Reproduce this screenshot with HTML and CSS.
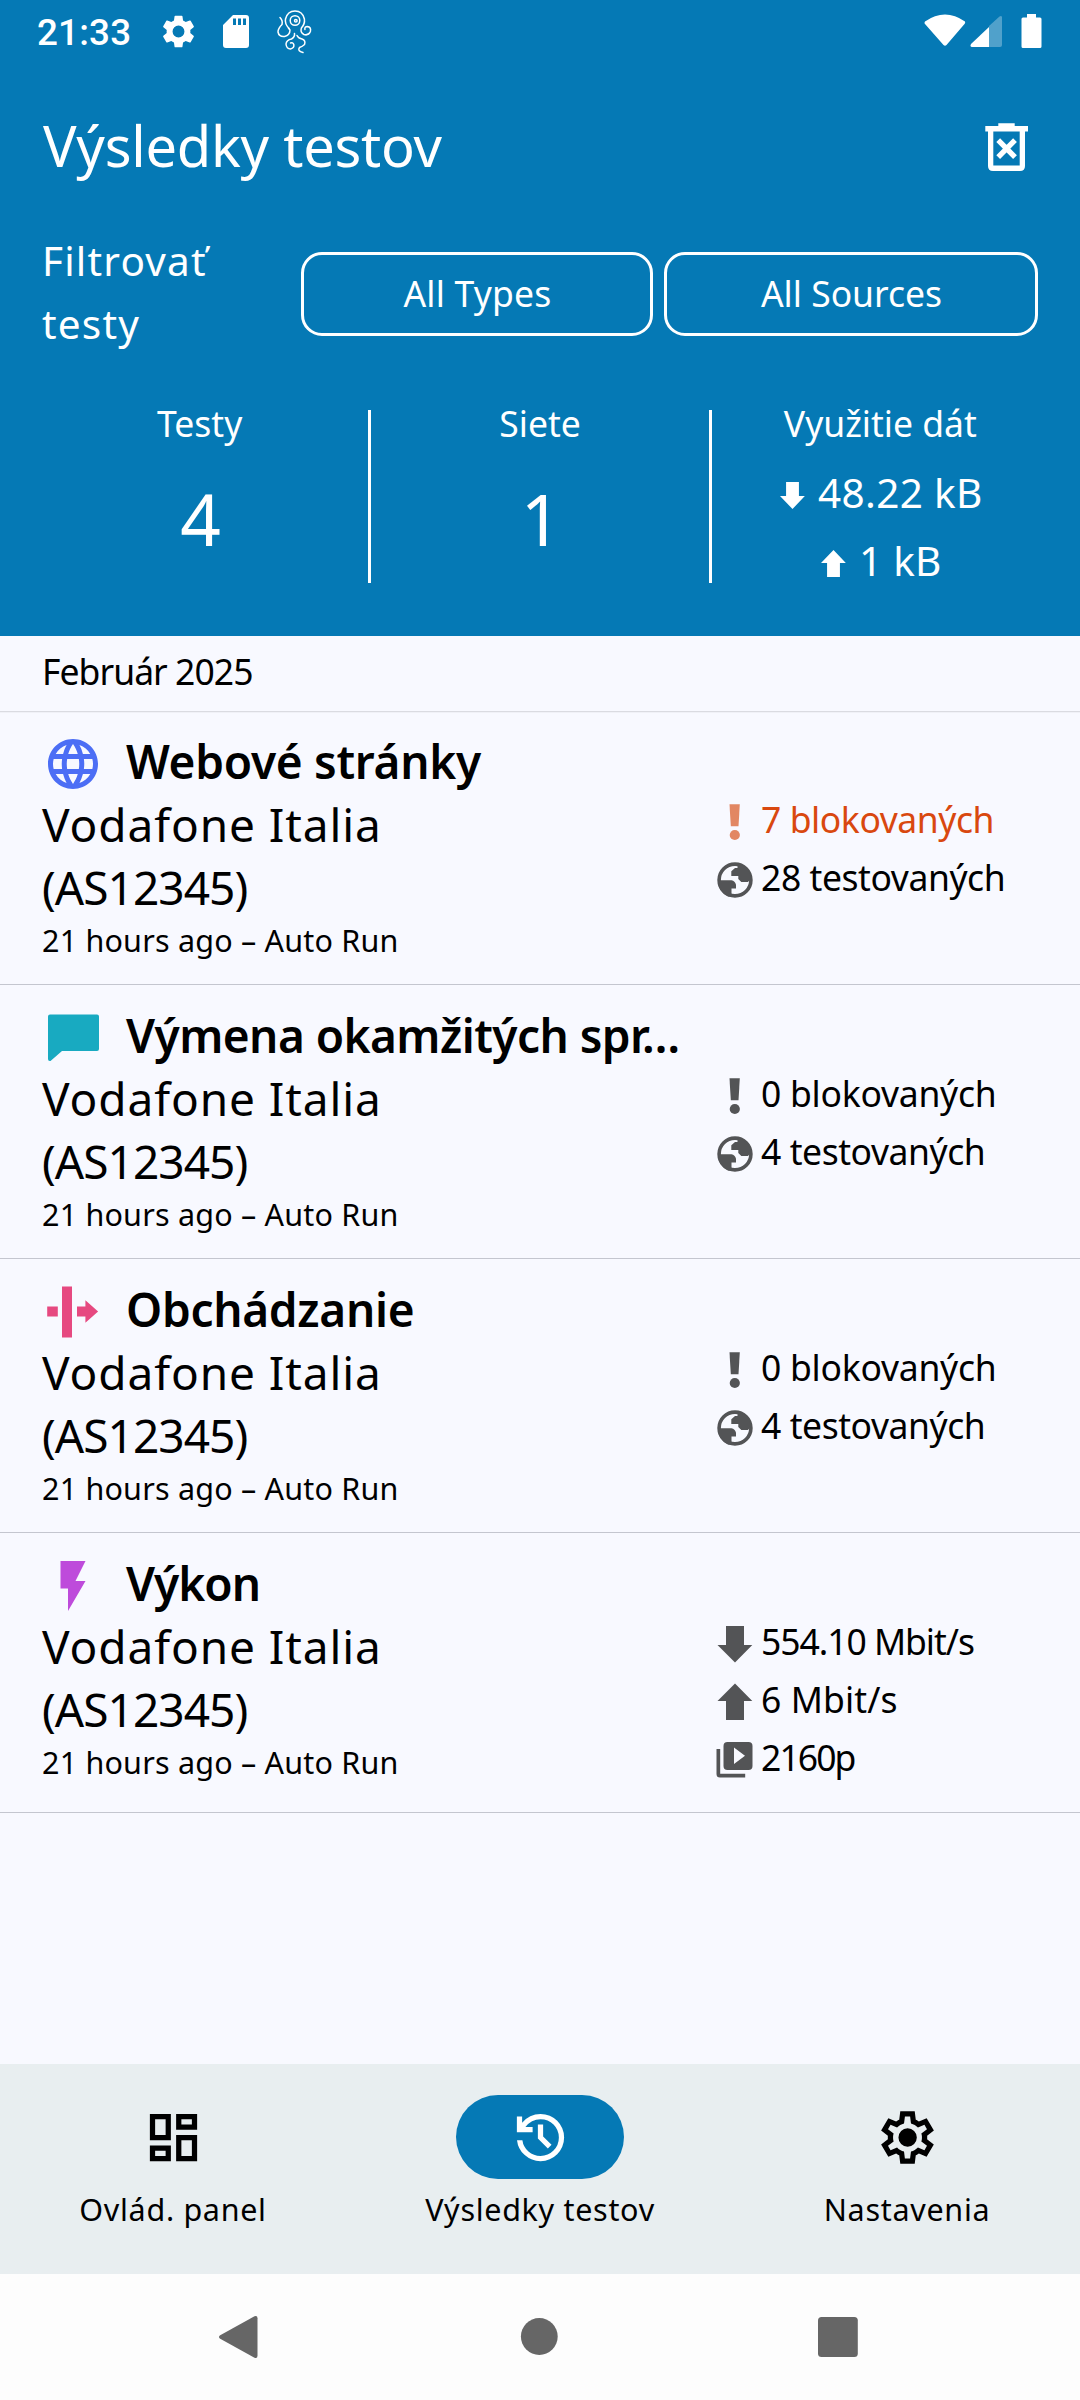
FILE: index.html
```html
<!DOCTYPE html>
<html lang="sk">
<head>
<meta charset="utf-8">
<title>Výsledky testov</title>
<link rel="stylesheet" href="styles.css">
</head>
<body>
<svg width="0" height="0" class="defs" aria-hidden="true">
  <symbol id="bang" viewBox="0 0 42 42"><path d="M15.5 3.300h10.300l-1.300 22h-7.700z"/><circle cx="20.800" cy="34" r="5.100"/></symbol>
  <symbol id="earth" viewBox="0 0 42 42">
    <circle cx="21" cy="21" r="15.900" fill="none" stroke="currentColor" stroke-width="3.600"/>
    <path d="M4 21.300h13.500q3.500.5 4.500 4.500v3.700h-4.500v8H14Q4 33 4 21.300z"/>
    <path d="M23.500 5.500v3.500h-2.500l-3.700 3.300v4.700h7v3l3 3h6.700l2.500-3V15q-3-8-13-9.500z"/>
  </symbol>
  <symbol id="down" viewBox="0 0 42 42"><path d="M12 3h18v19h8.300L21 39.500 3.500 22H12z"/></symbol>
  <symbol id="up" viewBox="0 0 42 42"><path d="M12 39h18V20h8.300L21 2.500 3.500 20H12z"/></symbol>
  <symbol id="video" viewBox="0 0 42 42"><path fill-rule="evenodd" d="M13.500 3h21q4 0 4 4v20q0 4-4 4h-21q-4 0-4-4V7q0-4 4-4zm6.500 5.500v16.500L31 16.700zM2.500 10h3.700v24.800h25v3.600H6q-3.500 0-3.500-3.500z"/></symbol>
</svg>

<header class="header">
  <div class="status">
    <span class="clock">21:33</span>
    <svg class="st-gear" viewBox="2 2 20 20"><path d="M19.140 12.940c.04-.3.060-.61.060-.94s-.02-.64-.07-.94l2.030-1.580a.49.49 0 0 0 .12-.61l-1.920-3.320a.488.488 0 0 0-.59-.22l-2.390.96c-.5-.38-1.030-.7-1.620-.94l-.36-2.540a.484.484 0 0 0-.48-.41h-3.840c-.24 0-.43.17-.47.41l-.36 2.540c-.59.24-1.130.57-1.620.94l-2.390-.96c-.22-.08-.47 0-.59.22L2.740 8.870c-.12.21-.08.47.12.61l2.030 1.580c-.05.3-.09.63-.09.94s.02.64.07.94l-2.030 1.580a.49.49 0 0 0-.12.61l1.920 3.320c.12.22.37.29.59.22l2.390-.96c.5.38 1.030.7 1.620.94l.36 2.540c.05.24.24.41.48.41h3.840c.24 0 .44-.17.47-.41l.36-2.540c.59-.24 1.130-.56 1.620-.94l2.390.96c.22.08.47 0 .59-.22l1.920-3.320c.12-.22.070-.47-.12-.61zM12 15.600a3.600 3.600 0 1 1 0-7.200 3.600 3.600 0 0 1 0 7.200z"/></svg>
    <svg class="st-card" viewBox="0 0 26 33"><path fill-rule="evenodd" d="M10 0h13q3 0 3 3v27q0 3-3 3H3q-3 0-3-3V10zm0 3.500v6.500h3V3.500zm5 0v6.500h3V3.500zm5 0v6.500h3V3.500z"/></svg>
    <svg class="st-octo" viewBox="276 9 36 45">
      <path d="M289 28.500q-4.500-5-3.500-9.500 2-8 9.500-8 7.500 0 9.400 8 .7 5-3 9-1.500 4.500 2.500 6.500 4.500 1.500 6.500-3 1-4.500-3-5-3 0-2.500 3"/>
      <path d="M280 17.500q3 3 2 7-4 4-4 7.500 1 5 6.500 4.500 5.500-1.500 5.500-6.500l-1.500-2"/>
      <path d="M294.500 33.500q.5 3.500-3 5.500-5 1-5.500 5 .5 5 4.500 5 4-1 3.300-4.500-1-2.500-3.300-1.500"/>
      <path d="M297 35.500q1.500 3 5 3.500 4 1.500 2.500 5.500-2 2-5 3-2.500 3.500 3.500 5"/>
      <circle cx="295" cy="20.500" r="4.800"/><circle cx="295.800" cy="20.800" r="1.300"/>
    </svg>
    <svg class="st-right" viewBox="924 14 118 34">
      <path d="M925 21.500q20-14 40 0 .5 1.500-.5 2.500L946.500 45q-1.500 1.500-3 0L925 24q-1-1 0-2.500z"/>
      <path d="M989 26l10.500-9.500q2-1 2.500.5v28q0 2-2 2h-11z" opacity=".3"/><path d="M989 27v20h-17q-2.500-.5-1-3z"/>
      <path d="M1027 14h9v3.500h4q1.500 0 1.500 1.500v27.500q0 1.500-1.500 1.500h-17q-1.500 0-1.500-1.500V19q0-1.500 1.500-1.500h4z"/>
    </svg>
  </div>
  <div class="appbar">
    <h1>Výsledky testov</h1>
    <svg class="trash" viewBox="985 123 43 48"><path fill-rule="evenodd" d="M998.300 123.300h16.400v2.700H1028v5.500h-3V166q0 5-5 5h-27q-5 0-5-5v-34.500h-2.700V126h13zM993.300 131.500v34h26.400v-34z"/><path d="M998.200 140.200l16.800 17M1015 140.200l-16.800 17" stroke="#fff" stroke-width="5.300"/></svg>
  </div>
  <div class="filters">
    <div class="filter-label">Filtrovať testy</div>
    <div class="buttons">
      <button class="chip types">All Types</button>
      <button class="chip sources">All Sources</button>
    </div>
  </div>
  <div class="summary">
    <div class="col"><div class="cap">Testy</div><div class="num">4</div></div>
    <div class="bar"></div>
    <div class="col"><div class="cap">Siete</div><div class="num">1</div></div>
    <div class="bar"></div>
    <div class="col"><div class="cap">Využitie dát</div>
      <div class="data">
        <div><svg viewBox="3.500 3 35 36.500" preserveAspectRatio="none"><path d="M12 3h18v19h8.300L21 39.500 3.500 22H12z"/></svg><span>48.22 kB</span></div>
        <div><svg viewBox="3.500 2.500 35 36.500" preserveAspectRatio="none"><path d="M12 39h18V20h8.300L21 2.500 3.500 20H12z"/></svg><span>1 kB</span></div>
      </div>
    </div>
  </div>
</header>

<main class="results">
  <div class="month">Február 2025</div>

  <article class="row">
    <div class="info">
      <h2><svg class="web" viewBox="0 0 24 24"><path d="M11.990 2C6.470 2 2 6.480 2 12s4.470 10 9.990 10C17.520 22 22 17.520 22 12S17.520 2 11.990 2zm6.930 6h-2.950c-.32-1.250-.78-2.450-1.380-3.560 1.840.63 3.370 1.910 4.330 3.560zM12 4.040c.83 1.200 1.480 2.530 1.910 3.960h-3.820c.43-1.430 1.080-2.760 1.910-3.960zM4.260 14C4.100 13.360 4 12.690 4 12s.1-1.360.26-2h3.380c-.08.66-.14 1.320-.14 2s.060 1.340.14 2H4.260zm.82 2h2.950c.32 1.250.78 2.450 1.380 3.560-1.840-.63-3.370-1.900-4.330-3.560zm2.950-8H5.080c.96-1.660 2.490-2.930 4.330-3.560C8.810 5.550 8.350 6.750 8.030 8zM12 19.960c-.83-1.200-1.480-2.530-1.910-3.960h3.820c-.43 1.430-1.080 2.760-1.910 3.960zM14.340 14H9.660c-.09-.66-.16-1.320-.16-2s.07-1.350.16-2h4.680c.09.65.16 1.320.16 2s-.07 1.340-.16 2zm.25 5.560c.6-1.110 1.060-2.310 1.380-3.560h2.950c-.96 1.650-2.490 2.930-4.330 3.560zM16.360 14c.08-.66.14-1.320.14-2s-.060-1.340-.14-2h3.380c.16.64.26 1.310.26 2s-.1 1.360-.26 2h-3.380z"/></svg><span>Webové stránky</span></h2>
      <div class="net">Vodafone Italia</div><div class="net asn">(AS12345)</div>
      <div class="time">21 hours ago – Auto Run</div>
    </div>
    <ul class="stats">
      <li class="alert"><svg><use href="#bang"/></svg><span>7 blokovaných</span></li>
      <li><svg><use href="#earth"/></svg><span>28 testovaných</span></li>
    </ul>
  </article>

  <article class="row">
    <div class="info">
      <h2><svg class="chat" viewBox="0 0 60 60"><path d="M7 6.500h47q2 0 2 2V41q0 2-2 2H19L7.500 53q-2.500.5-2.500-2V8.500q0-2 2-2z"/></svg><span class="long">Výmena okamžitých spr…</span></h2>
      <div class="net">Vodafone Italia</div><div class="net asn">(AS12345)</div>
      <div class="time">21 hours ago – Auto Run</div>
    </div>
    <ul class="stats">
      <li><svg><use href="#bang"/></svg><span class="blocked">0 blokovaných</span></li>
      <li><svg><use href="#earth"/></svg><span>4 testovaných</span></li>
    </ul>
  </article>

  <article class="row">
    <div class="info">
      <h2><svg class="bypass" viewBox="0 0 60 60"><path d="M4.200 24.500h10.600v10H4.200zM19 4.500h10v51H19zM34 24.500h8.400v-6.200L55.100 29.500 42.400 40.700v-6.200H34z"/></svg><span>Obchádzanie</span></h2>
      <div class="net">Vodafone Italia</div><div class="net asn">(AS12345)</div>
      <div class="time">21 hours ago – Auto Run</div>
    </div>
    <ul class="stats">
      <li><svg><use href="#bang"/></svg><span class="blocked">0 blokovaných</span></li>
      <li><svg><use href="#earth"/></svg><span>4 testovaných</span></li>
    </ul>
  </article>

  <article class="row last">
    <div class="info">
      <h2><svg class="perf" viewBox="0 0 24 24"><path d="M7 2v11h3v9l7-12h-4l4-8z"/></svg><span class="short">Výkon</span></h2>
      <div class="net">Vodafone Italia</div><div class="net asn">(AS12345)</div>
      <div class="time">21 hours ago – Auto Run</div>
    </div>
    <ul class="stats">
      <li><svg><use href="#down"/></svg><span class="rate">554.10 Mbit/s</span></li>
      <li><svg><use href="#up"/></svg><span class="up">6 Mbit/s</span></li>
      <li><svg><use href="#video"/></svg><span class="res">2160p</span></li>
    </ul>
  </article>
</main>

<nav class="tabs">
  <a class="tab"><span class="pill"><svg viewBox="0 -960 960 960"><path d="M520-600v-240h320v240H520ZM120-440v-400h320v400H120Zm400 320v-400h320v400H520Zm-400 0v-240h320v240H120Zm80-400h160v-240H200v240Zm400 320h160v-240H600v240Zm0-480h160v-80H600v80ZM200-200h160v-80H200v80Z"/></svg></span><span>Ovlád. panel</span></a>
  <a class="tab active"><span class="pill"><svg viewBox="0 -960 960 960"><path d="M480-120q-138 0-240.500-91.500T122-440h82q14 104 92.500 172T480-200q117 0 198.500-81.500T760-480q0-117-81.500-198.500T480-760q-69 0-129 32t-101 88h110v80H120v-240h80v94q51-64 124.500-99T480-840q75 0 140.500 28.500t114 77q48.500 48.500 77 114T840-480q0 75-28.500 140.500t-77 114q-48.500 48.500-114 77T480-120Zm112-192L440-464v-216h80v184l128 128-56 56Z"/></svg></span><span>Výsledky testov</span></a>
  <a class="tab"><span class="pill"><svg viewBox="0 -960 960 960"><path d="m370-80-16-128q-13-5-24.500-12T307-235l-119 50L78-375l103-78q-1-7-1-13.500v-27q0-6.500 1-13.500L78-585l110-190 119 50q11-8 23-15t24-12l16-128h220l16 128q13 5 24.500 12t22.500 15l119-50 110 190-103 78q1 7 1 13.500v27q0 6.500-2 13.500l103 78-110 190-118-50q-11 8-23 15t-24 12L590-80H370Zm70-80h79l14-106q31-8 57.500-23.500T639-327l99 41 39-68-86-65q5-14 7-29.500t2-31.500q0-16-2-31.500t-7-29.500l86-65-39-68-99 42q-22-23-48.500-38.500T533-694l-13-106h-79l-14 106q-31 8-57.500 23.500T321-633l-99-41-39 68 86 64q-5 15-7 30t-2 32q0 16 2 31t7 30l-86 65 39 68 99-42q22 23 48.500 38.500T427-266l13 106Zm42-180q58 0 99-41t41-99q0-58-41-99t-99-41q-59 0-99.500 41T342-480q0 58 40.500 99t99.500 41Z"/></svg></span><span>Nastavenia</span></a>
</nav>

<div class="sysnav">
  <svg viewBox="0 0 44 44"><path d="M2.200 20.300L36.500 1.300q3-1 3 2v37.500q0 3-3 2L2.200 23.800q-2.400-1.800 0-3.500z"/></svg>
  <svg viewBox="0 0 44 44"><circle cx="21.300" cy="21.500" r="18.400"/></svg>
  <svg viewBox="0 0 44 44"><rect x="0" y="2" width="39.800" height="40" rx="3.500"/></svg>
</div>
</body>
</html>
```

FILE: styles.css
```css
* { box-sizing: border-box; }

body {
  margin: 0;
  width: 1080px;
  height: 2400px;
  display: flex;
  flex-direction: column;
  background: #f8f9ff;
  color: #000;
  font-family: "Noto Sans", sans-serif;
  overflow: hidden;
}

.defs { display: block; flex: none; height: 0; }
svg { display: block; flex: none; fill: currentColor; }
h1, h2, ul { margin: 0; padding: 0; font-weight: 400; }
ul { list-style: none; }

/* Header */
.header { height: 636px; flex: none; background: #0579b5; color: #fff; }

.status { height: 63px; display: flex; padding-left: 37px; }
.clock {
  width: 125px;
  font: 500 36.750px/66px Roboto, sans-serif;
  letter-spacing: .2px;
}
.st-gear { width: 33px; height: 33px; margin-top: 15px; }
.st-card { width: 26px; height: 33px; margin: 15px 0 0 28px; }
.st-octo {
  width: 36px;
  height: 45px;
  margin: 9px 0 0 27px;
  fill: none;
  stroke: #fff;
  stroke-width: 1.500;
  stroke-linecap: round;
}
.st-right { width: 118px; height: 34px; margin: 14px 38px 0 auto; }

.appbar {
  height: 166px;
  display: flex;
  align-items: center;
  justify-content: space-between;
  padding: 0 52px 0 43px;
}
h1 { font-size: 56px; line-height: 74px; letter-spacing: -.25px; padding-bottom: 3px; }
.trash { width: 43px; height: 48px; margin-top: 2px; }

.filters { height: 126px; display: flex; align-items: center; padding: 0 42px; }
.filter-label { width: 259px; padding-right: 60px; font-size: 40.500px; line-height: 63px; letter-spacing: 1.200px; }
.buttons { flex: 1; display: flex; gap: 11px; padding-top: 4px; }
.chip {
  height: 84px;
  padding: 0 0 3px 1px;
  border: 3px solid #fff;
  border-radius: 21px;
  background: none;
  color: #fff;
  font: 35.500px/52px "Noto Sans", sans-serif;
}
.types { width: 352px; letter-spacing: .2px; }
.sources { width: 374px; }

.summary { display: flex; margin-top: 42px; padding: 0 31px; }
.col { flex: 1; text-align: center; }
.bar { width: 3px; height: 173px; margin-top: 13px; background: #fff; }
.cap { font-size: 35.500px; line-height: 52px; }
.num { margin-top: 22px; padding-left: 2px; font-size: 71px; line-height: 96px; }
.data { margin-top: 10px; padding-left: 2px; font-size: 40.500px; line-height: 68px; letter-spacing: .3px; }
.data div { display: flex; align-items: center; justify-content: center; gap: 13px; }
.data svg { width: 25px; height: 27px; margin-top: 5px; }

/* Result list */
.results { flex: 1; }
.month {
  position: relative;
  height: 75px;
  padding-left: 42px;
  font-size: 35.500px;
  line-height: 70px;
  letter-spacing: -.95px;
  box-shadow: 0 1px #dadbe1, 0 2px #f0f1f7;
}
.row {
  height: 274px;
  display: flex;
  padding: 19px 0 0 42px;
  border-bottom: 1px solid #c4c6cf;
}
.row.last { height: 280px; }
.info { width: 672px; }
h2 { display: flex; align-items: center; height: 63px; gap: 23px; font-size: 46px; line-height: 63px; font-weight: 600; white-space: nowrap; }
h2 svg { width: 60px; height: 60px; margin: 4px 0 0 1px; }
h2 span { letter-spacing: -.3px; }
h2 .long { letter-spacing: -.55px; }
h2 .short { letter-spacing: -1px; }
.web { color: #4c6ef5; }
.chat { color: #18aac1; }
.bypass { color: #e64980; }
.perf { color: #be4bdb; }
.net { font-size: 46px; line-height: 63px; letter-spacing: .9px; }
.asn { letter-spacing: -.95px; }
.time { font-size: 30.500px; line-height: 42px; letter-spacing: .2px; }

.stats { margin-top: 60px; font-size: 35.500px; line-height: 58px; letter-spacing: -.43px; }
.stats li { display: flex; align-items: center; gap: 5px; }
.stats svg { width: 42px; height: 42px; margin-top: 6px; color: #535456; }
.alert { color: #d9480f; }
.stats .alert svg { color: #e28763; }
.blocked { letter-spacing: -.25px; }
.rate { letter-spacing: -1.050px; }
.up { letter-spacing: .1px; }
.res { letter-spacing: -1.900px; }

/* Bottom navigation */
.tabs { height: 210px; flex: none; display: flex; gap: 21px; padding-top: 31px; background: #e8eef0; }
.tab { flex: 1; display: flex; flex-direction: column; align-items: center; gap: 9px; font-size: 30.500px; line-height: 42px; letter-spacing: .7px; }
.pill { width: 168px; height: 84px; display: flex; align-items: center; justify-content: center; border-radius: 42px; }
.pill svg { width: 63px; height: 63px; }
.active .pill { background: #0579b5; color: #fff; }

.sysnav { height: 126px; flex: none; display: flex; justify-content: space-around; align-items: center; padding: 0 90px; background: #fdfdfd; color: #666; }
.sysnav svg { width: 44px; height: 44px; }
```
